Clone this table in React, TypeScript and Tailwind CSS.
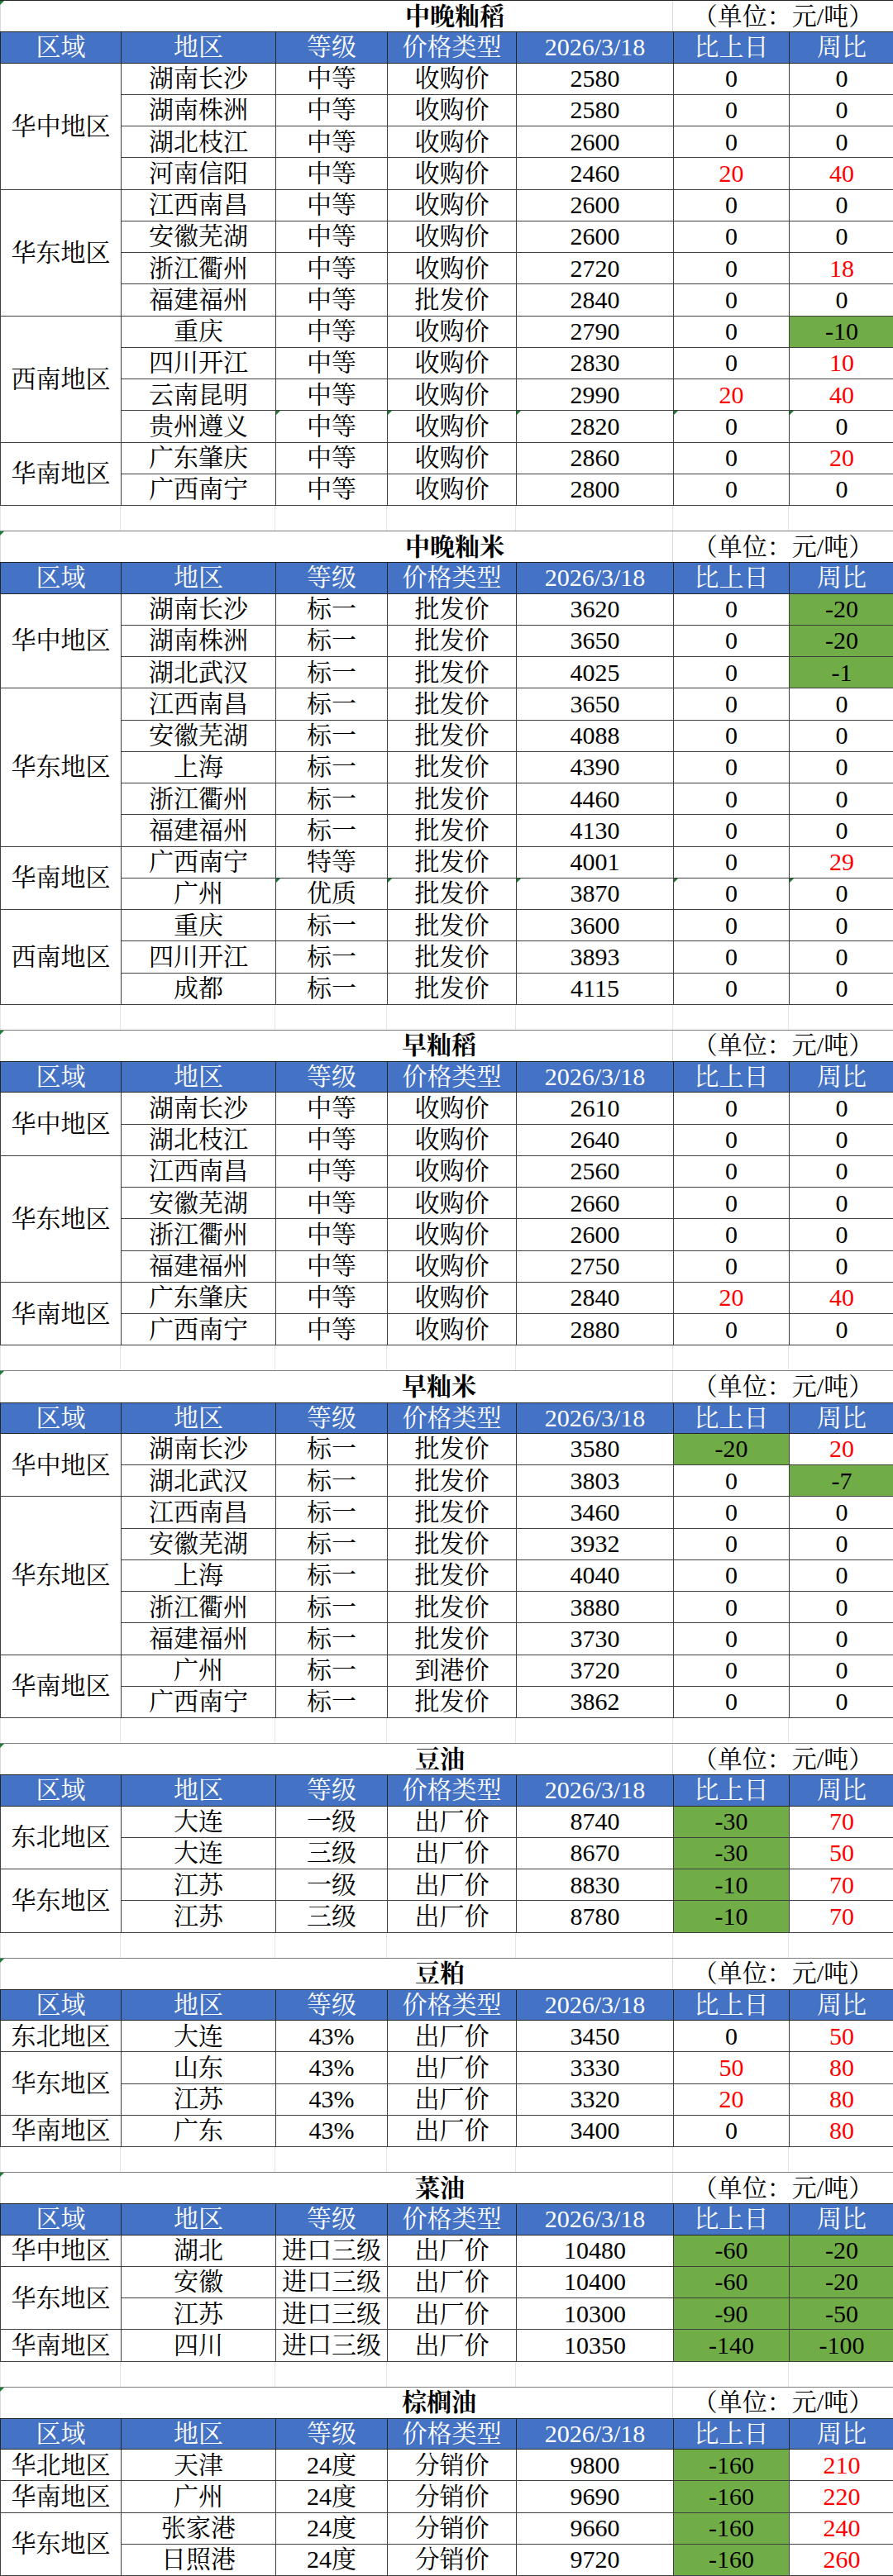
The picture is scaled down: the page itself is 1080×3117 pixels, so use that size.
import React from "react";

type Row = {
  area: string;
  grade: string;
  kind: string;
  price: string;
  day: string;
  week: string;
  mark?: boolean;
};

type Group = { region: string; rows: Row[] };

type PriceTableData = {
  title: string;
  // left offset of the title text, matches the sheet
  titlePad: string;
  groups: Group[];
};

// "地区|等级|价格类型|价格|比上日|周比" -> Row
const r = (s: string, mark = false): Row => {
  const [area, grade, kind, price, day, week] = s.split("|");
  return { area, grade, kind, price, day, week, mark };
};

const tables: PriceTableData[] = [
  {
    title: "中晚籼稻",
    titlePad: "pl-[489px]",
    groups: [
      {
        region: "华中地区",
        rows: [
          r("湖南长沙|中等|收购价|2580|0|0"),
          r("湖南株洲|中等|收购价|2580|0|0"),
          r("湖北枝江|中等|收购价|2600|0|0"),
          r("河南信阳|中等|收购价|2460|20|40"),
        ],
      },
      {
        region: "华东地区",
        rows: [
          r("江西南昌|中等|收购价|2600|0|0"),
          r("安徽芜湖|中等|收购价|2600|0|0"),
          r("浙江衢州|中等|收购价|2720|0|18"),
          r("福建福州|中等|批发价|2840|0|0"),
        ],
      },
      {
        region: "西南地区",
        rows: [
          r("重庆|中等|收购价|2790|0|-10"),
          r("四川开江|中等|收购价|2830|0|10"),
          r("云南昆明|中等|收购价|2990|20|40"),
          r("贵州遵义|中等|收购价|2820|0|0", true),
        ],
      },
      {
        region: "华南地区",
        rows: [
          r("广东肇庆|中等|收购价|2860|0|20"),
          r("广西南宁|中等|收购价|2800|0|0"),
        ],
      },
    ],
  },
  {
    title: "中晚籼米",
    titlePad: "pl-[489px]",
    groups: [
      {
        region: "华中地区",
        rows: [
          r("湖南长沙|标一|批发价|3620|0|-20"),
          r("湖南株洲|标一|批发价|3650|0|-20"),
          r("湖北武汉|标一|批发价|4025|0|-1"),
        ],
      },
      {
        region: "华东地区",
        rows: [
          r("江西南昌|标一|批发价|3650|0|0"),
          r("安徽芜湖|标一|批发价|4088|0|0"),
          r("上海|标一|批发价|4390|0|0"),
          r("浙江衢州|标一|批发价|4460|0|0"),
          r("福建福州|标一|批发价|4130|0|0"),
        ],
      },
      {
        region: "华南地区",
        rows: [
          r("广西南宁|特等|批发价|4001|0|29"),
          r("广州|优质|批发价|3870|0|0", true),
        ],
      },
      {
        region: "西南地区",
        rows: [
          r("重庆|标一|批发价|3600|0|0"),
          r("四川开江|标一|批发价|3893|0|0"),
          r("成都|标一|批发价|4115|0|0"),
        ],
      },
    ],
  },
  {
    title: "早籼稻",
    titlePad: "pl-[485px]",
    groups: [
      {
        region: "华中地区",
        rows: [
          r("湖南长沙|中等|收购价|2610|0|0"),
          r("湖北枝江|中等|收购价|2640|0|0"),
        ],
      },
      {
        region: "华东地区",
        rows: [
          r("江西南昌|中等|收购价|2560|0|0"),
          r("安徽芜湖|中等|收购价|2660|0|0"),
          r("浙江衢州|中等|收购价|2600|0|0"),
          r("福建福州|中等|收购价|2750|0|0"),
        ],
      },
      {
        region: "华南地区",
        rows: [
          r("广东肇庆|中等|收购价|2840|20|40"),
          r("广西南宁|中等|收购价|2880|0|0"),
        ],
      },
    ],
  },
  {
    title: "早籼米",
    titlePad: "pl-[485px]",
    groups: [
      {
        region: "华中地区",
        rows: [
          r("湖南长沙|标一|批发价|3580|-20|20"),
          r("湖北武汉|标一|批发价|3803|0|-7"),
        ],
      },
      {
        region: "华东地区",
        rows: [
          r("江西南昌|标一|批发价|3460|0|0"),
          r("安徽芜湖|标一|批发价|3932|0|0"),
          r("上海|标一|批发价|4040|0|0"),
          r("浙江衢州|标一|批发价|3880|0|0"),
          r("福建福州|标一|批发价|3730|0|0"),
        ],
      },
      {
        region: "华南地区",
        rows: [
          r("广州|标一|到港价|3720|0|0"),
          r("广西南宁|标一|批发价|3862|0|0"),
        ],
      },
    ],
  },
  {
    title: "豆油",
    titlePad: "pl-[501px]",
    groups: [
      {
        region: "东北地区",
        rows: [
          r("大连|一级|出厂价|8740|-30|70"),
          r("大连|三级|出厂价|8670|-30|50"),
        ],
      },
      {
        region: "华东地区",
        rows: [
          r("江苏|一级|出厂价|8830|-10|70"),
          r("江苏|三级|出厂价|8780|-10|70"),
        ],
      },
    ],
  },
  {
    title: "豆粕",
    titlePad: "pl-[501px]",
    groups: [
      { region: "东北地区", rows: [r("大连|43%|出厂价|3450|0|50")] },
      {
        region: "华东地区",
        rows: [
          r("山东|43%|出厂价|3330|50|80"),
          r("江苏|43%|出厂价|3320|20|80"),
        ],
      },
      { region: "华南地区", rows: [r("广东|43%|出厂价|3400|0|80")] },
    ],
  },
  {
    title: "菜油",
    titlePad: "pl-[501px]",
    groups: [
      { region: "华中地区", rows: [r("湖北|进口三级|出厂价|10480|-60|-20")] },
      {
        region: "华东地区",
        rows: [
          r("安徽|进口三级|出厂价|10400|-60|-20"),
          r("江苏|进口三级|出厂价|10300|-90|-50"),
        ],
      },
      { region: "华南地区", rows: [r("四川|进口三级|出厂价|10350|-140|-100")] },
    ],
  },
  {
    title: "棕榈油",
    titlePad: "pl-[485px]",
    groups: [
      { region: "华北地区", rows: [r("天津|24度|分销价|9800|-160|210")] },
      { region: "华南地区", rows: [r("广州|24度|分销价|9690|-160|220")] },
      {
        region: "华东地区",
        rows: [
          r("张家港|24度|分销价|9660|-160|240"),
          r("日照港|24度|分销价|9720|-160|260"),
        ],
      },
    ],
  },
];

const headers = ["区域", "地区", "等级", "价格类型", "2026/3/18", "比上日", "周比"];

const GRID = "grid grid-cols-[146px_187px_135px_156px_190px_140px_126px]";

const SPAN: Record<number, string> = {
  1: "row-span-1",
  2: "row-span-2",
  3: "row-span-3",
  4: "row-span-4",
  5: "row-span-5",
};

// green "number stored as text" flag in the corner of a cell
function Flag() {
  return (
    <span className="absolute left-0 top-0 h-0 w-0 border-t-[5px] border-r-[5px] border-t-[#1e7b34] border-r-transparent" />
  );
}

function Change({ value, last }: { value: string; last?: boolean }) {
  const neg = value.startsWith("-");
  const pos = !neg && value !== "0";
  return (
    <div
      className={`flex items-center justify-center border-b border-[#404040] ${
        last ? "" : "border-r"
      } ${neg ? "bg-[#70ad47]" : ""} ${pos ? "text-[#ff0000]" : "text-black"}`}
    >
      {value}
    </div>
  );
}

function Cell({ children, mark }: { children: React.ReactNode; mark?: boolean }) {
  return (
    <div className="relative flex items-center justify-center border-b border-r border-[#404040]">
      {mark && <Flag />}
      {children}
    </div>
  );
}

function PriceTable({ data, first }: { data: PriceTableData; first: boolean }) {
  return (
    <section>
      {/* title row */}
      <div
        className={`relative grid h-[38.25px] grid-cols-[814px_266px] border-t ${
          first ? "border-[#262626]" : "border-[#7f7f7f]"
        }`}
      >
        <Flag />
        <div
          className={`flex items-center border-l border-r border-[#d9d9d9] font-bold ${data.titlePad}`}
        >
          {data.title}
        </div>
        <div className="flex items-center justify-center">（单位：元/吨）</div>
      </div>

      {/* header */}
      <div className={`${GRID} h-[38.25px] border-l border-t border-[#262626] bg-[#4472c4] text-white`}>
        {headers.map((h, i) => (
          <div
            key={h}
            className={`flex items-center justify-center border-b border-[#262626] ${
              i < headers.length - 1 ? "border-r" : ""
            }`}
          >
            {h}
          </div>
        ))}
      </div>

      {/* data rows */}
      <div className={`${GRID} auto-rows-[38.25px] border-l border-[#404040]`}>
        {data.groups.map((g) => (
          <React.Fragment key={g.region + g.rows[0].area}>
            <div
              className={`${SPAN[g.rows.length]} flex items-center justify-center border-b border-r border-[#404040]`}
            >
              {g.region}
            </div>
            {g.rows.map((row, i) => (
              <React.Fragment key={i}>
                <Cell>{row.area}</Cell>
                <Cell mark={row.mark}>{row.grade}</Cell>
                <Cell mark={row.mark}>{row.kind}</Cell>
                <Cell mark={row.mark}>{row.price}</Cell>
                <div className="relative flex">
                  {row.mark && <Flag />}
                  <div className="flex-1 grid">
                    <Change value={row.day} />
                  </div>
                </div>
                <div className="relative flex">
                  {row.mark && <Flag />}
                  <div className="flex-1 grid">
                    <Change value={row.week} last />
                  </div>
                </div>
              </React.Fragment>
            ))}
          </React.Fragment>
        ))}
      </div>
    </section>
  );
}

function Spacer() {
  return (
    <div className={`${GRID} h-[30px]`}>
      {headers.map((h, i) => (
        <div
          key={h}
          className={`border-[#e4e4e4] ${i === 0 ? "border-l" : ""} ${
            i < headers.length - 1 ? "border-r" : ""
          }`}
        />
      ))}
    </div>
  );
}

export default function App() {
  return (
    <div
      className="w-[1080px] bg-white text-[30px] leading-none text-black"
      style={{
        fontFamily:
          '"Liberation Serif", "Noto Serif CJK SC", "Noto Sans CJK SC", serif',
      }}
    >
      {tables.map((t, i) => (
        <React.Fragment key={t.title}>
          {i > 0 && <Spacer />}
          <PriceTable data={t} first={i === 0} />
        </React.Fragment>
      ))}
    </div>
  );
}
